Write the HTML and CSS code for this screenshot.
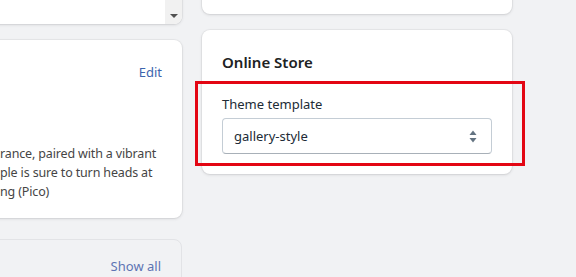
FILE: index.html
```html
<!DOCTYPE html>
<html lang="en">

<head>
    <meta charset="UTF-8">
    <meta name="viewport" content="width=device-width, initial-scale=1.0">
    <title>Product - Online Store</title>
    <link rel="stylesheet" href="styles.css">
</head>

<body>
    <div class="page">
        <!-- left column (cut off on the left) -->
        <div class="col-left">
            <div class="card card-top">
                <div class="field"></div>
                <div class="scrollbar"><span class="scroll-arrow"></span></div>
            </div>

            <div class="card card-desc">
                <div class="card-head">
                    <a class="link" href="#">Edit</a>
                </div>
                <p class="desc">rance, paired with a vibrant<br>ple is sure to turn heads at<br>ng (Pico)</p>
            </div>

            <div class="card card-faded">
                <div class="card-head">
                    <a class="link link-faded" href="#">Show all</a>
                </div>
            </div>
        </div>

        <!-- right column -->
        <div class="col-right">
            <div class="card card-stub"></div>

            <div class="card card-store">
                <h2 class="card-title">Online Store</h2>
                <div class="form-row">
                    <label class="label" for="tpl">Theme template</label>
                    <div class="select">
                        <span class="select-value" id="tpl">gallery-style</span>
                        <svg class="select-arrow" viewBox="0 0 8 13" width="8" height="13">
                            <path d="M4 0.5 7.5 5H0.5z"></path>
                            <path d="M4 12.5 0.5 8h7z"></path>
                        </svg>
                    </div>
                </div>
                <!-- red annotation frame -->
                <div class="highlight"></div>
            </div>
        </div>
    </div>
</body>

</html>
```

FILE: styles.css
```css
* {
    margin: 0;
    padding: 0;
    box-sizing: border-box;
}

body {
    width: 100%;
    height: 100vh;
    overflow: hidden;
    background-color: #f1f2f4;
    font-family: "Noto Sans", "Open Sans", sans-serif;
    font-size: 13px;
    color: #212b36;
}

.page {
    display: flex;
    gap: 20px;
    margin-left: -20px;
}

.card {
    background-color: #fff;
    border-radius: 8px;
    box-shadow: 0 0 0 1px rgba(63, 63, 68, 0.05), 0 1px 3px 0 rgba(63, 63, 68, 0.15);
}

/* 左列 */

.col-left {
    display: flex;
    flex-direction: column;
    width: 202px;
}

.card-top {
    display: flex;
    height: 44px;
    margin-top: -20px;
    overflow: hidden;
}

.field {
    flex: 1;
}

.scrollbar {
    display: flex;
    justify-content: center;
    align-items: flex-end;
    width: 17px;
    padding-bottom: 6px;
    background-color: #f1f1f1;
}

.scroll-arrow {
    width: 0;
    height: 0;
    border-left: 4px solid transparent;
    border-right: 4px solid transparent;
    border-top: 4px solid #505050;
}

.card-desc {
    height: 178px;
    margin-top: 16px;
    padding: 20px;
}

.card-head {
    display: flex;
    justify-content: flex-end;
    height: 24px;
    line-height: 24px;
}

.link {
    color: #3d64ad;
    text-decoration: none;
}

.desc {
    margin-top: 60px;
    font-size: 12.5px;
    letter-spacing: -0.15px;
    line-height: 19px;
    white-space: nowrap;
    color: #454545;
}

.card-faded {
    height: 60px;
    margin-top: 21px;
    padding: 14px 20px;
    background-color: transparent;
    border: 1px solid #e2e3e6;
    box-shadow: none;
}

.link-faded {
    color: #5d74b3;
}

/* 右列 */

.col-right {
    display: flex;
    flex-direction: column;
    width: 310px;
}

.card-stub {
    height: 34px;
    margin-top: -20px;
}

.card-store {
    position: relative;
    margin-top: 16px;
    padding: 20px;
}

.card-title {
    font-size: 15px;
    font-weight: 600;
    line-height: 24px;
    color: #202223;
}

.form-row {
    margin-top: 20px;
}

.label {
    display: block;
    line-height: 20px;
    margin-bottom: 4px;
}

.select {
    display: flex;
    justify-content: space-between;
    align-items: center;
    height: 36px;
    padding: 0 14px 0 11px;
    border: 1px solid #c4cdd5;
    border-bottom-color: #a8b0b8;
    border-radius: 4px;
    color: #212b36;
}

.select-arrow {
    fill: #637381;
}

.highlight {
    position: absolute;
    left: -7px;
    top: 51px;
    width: 330px;
    height: 85px;
    border: 3px solid #e30613;
}
```
